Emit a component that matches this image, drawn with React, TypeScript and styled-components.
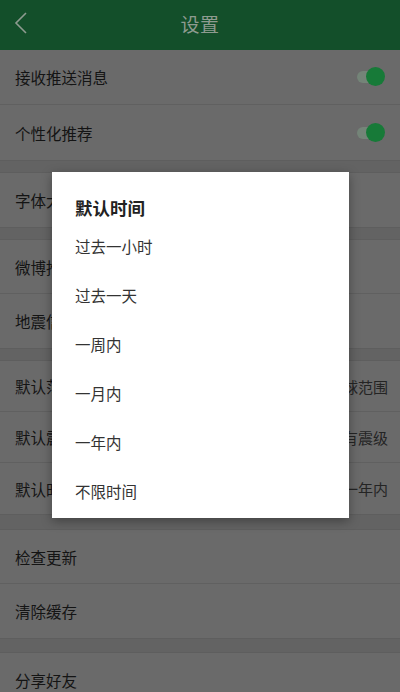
import React from 'react'
import styled, { createGlobalStyle } from 'styled-components'

const GlobalStyle = createGlobalStyle`
  html, body {
    margin: 0;
    padding: 0;
    background: #6a6a6a;
  }
  body {
    font-family: 'Noto Sans CJK SC', 'Noto Sans', sans-serif;
  }
  #root {
    width: 400px;
    height: 692px;
    overflow: hidden;
  }
`

const Page = styled.div`
  position: relative;
  width: 400px;
  height: 692px;
  overflow: hidden;
  background: #6a6a6a;
  display: flex;
  flex-direction: column;
`

const Header = styled.div`
  height: 50px;
  flex-shrink: 0;
  background: #134f2a;
  display: grid;
  grid-template-columns: 50px 1fr 50px;
  align-items: center;
  padding-bottom: 4px;
  box-sizing: border-box;
`

const Back = styled.div`
  display: flex;
  align-items: center;
  padding-left: 14px;
`

const Title = styled.div`
  text-align: center;
  color: #8e9b90;
  font-size: 19px;
  letter-spacing: 0.5px;
`

const Band = styled.div<{ $h: number }>`
  height: ${(p) => p.$h}px;
  flex-shrink: 0;
  background: #636363;
  border-top: 1px solid #5e5e5e;
  border-bottom: 1px solid #5e5e5e;
  box-sizing: border-box;
`

const Group = styled.div`
  display: flex;
  flex-direction: column;
  flex-shrink: 0;
`

const Row = styled.div<{ $h: number; $last?: boolean }>`
  height: ${(p) => p.$h}px;
  display: flex;
  align-items: center;
  justify-content: space-between;
  padding: 0 12px 0 15px;
  box-sizing: border-box;
  border-bottom: ${(p) => (p.$last ? 'none' : '1px solid #606060')};
`

const Label = styled.span`
  color: #141414;
  font-size: 15.5px;
`

const Value = styled.span`
  color: #242424;
  font-size: 15px;
`

const Toggle = styled.div`
  position: relative;
  width: 30px;
  height: 20px;
  margin-right: 3px;
  &::before {
    content: '';
    position: absolute;
    left: 2px;
    top: 4px;
    width: 24px;
    height: 12px;
    border-radius: 6px;
    background: #748478;
  }
  &::after {
    content: '';
    position: absolute;
    right: 0;
    top: 0;
    width: 19px;
    height: 19px;
    border-radius: 50%;
    background: #177a38;
  }
`

const Dialog = styled.div`
  position: absolute;
  left: 52px;
  top: 172px;
  width: 297px;
  height: 346px;
  background: #ffffff;
  box-shadow: 0 3px 10px rgba(0, 0, 0, 0.35);
  padding: 24px 0 2px;
  box-sizing: border-box;
  display: flex;
  flex-direction: column;
`

const DialogTitle = styled.div`
  height: 24px;
  line-height: 24px;
  margin-bottom: 2px;
  padding-left: 23px;
  font-size: 17.5px;
  font-weight: bold;
  color: #222;
`

const Option = styled.div`
  height: 49px;
  line-height: 49px;
  padding-left: 23px;
  font-size: 15.5px;
  color: #333;
`

type Item = { label: string; value?: string; toggle?: boolean }
type Section = { rowH: number; bandH: number; items: Item[] }

const sections: Section[] = [
  {
    rowH: 55,
    bandH: 0,
    items: [
      { label: '接收推送消息', toggle: true },
      { label: '个性化推荐', toggle: true },
    ],
  },
  { rowH: 54, bandH: 13, items: [{ label: '字体大小' }] },
  { rowH: 54, bandH: 13, items: [{ label: '微博推送' }, { label: '地震信息' }] },
  {
    rowH: 51,
    bandH: 13,
    items: [
      { label: '默认范围', value: '全球范围' },
      { label: '默认震级', value: '所有震级' },
      { label: '默认时间', value: '一年内' },
    ],
  },
  { rowH: 54, bandH: 16, items: [{ label: '检查更新' }, { label: '清除缓存' }] },
  { rowH: 54, bandH: 15, items: [{ label: '分享好友' }] },
]

const options = ['过去一小时', '过去一天', '一周内', '一月内', '一年内', '不限时间']

export default function App() {
  return (
    <>
      <GlobalStyle />
      <Page>
        <Header>
          <Back>
            <svg width="14" height="24" viewBox="0 0 14 24" fill="none">
              <path d="M12 2 L2 12 L12 22" stroke="#8e9b90" strokeWidth="1.6" />
            </svg>
          </Back>
          <Title>设置</Title>
          <div />
        </Header>
        {sections.map((s, si) => (
          <React.Fragment key={si}>
            {s.bandH > 0 && <Band $h={s.bandH} />}
            <Group>
              {s.items.map((it, i) => (
                <Row key={it.label} $h={s.rowH} $last={i === s.items.length - 1}>
                  <Label>{it.label}</Label>
                  {it.toggle && <Toggle />}
                  {it.value && <Value>{it.value}</Value>}
                </Row>
              ))}
            </Group>
          </React.Fragment>
        ))}
        <Dialog>
          <DialogTitle>默认时间</DialogTitle>
          {options.map((o) => (
            <Option key={o}>{o}</Option>
          ))}
        </Dialog>
      </Page>
    </>
  )
}
